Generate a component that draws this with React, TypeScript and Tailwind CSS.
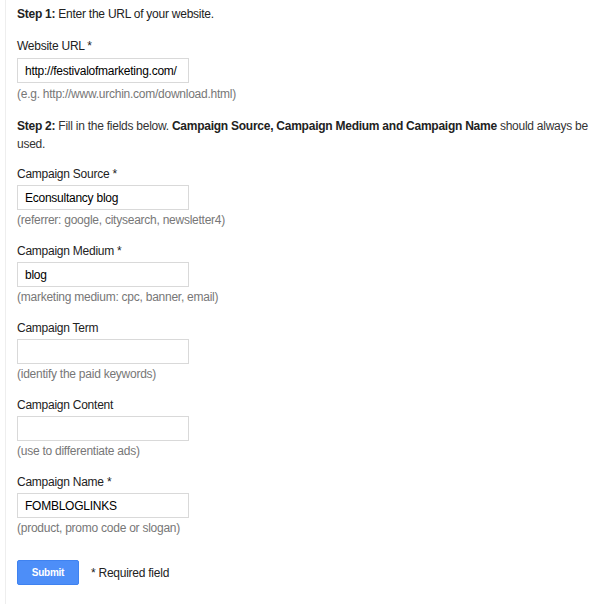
const fields = [
	{ label: 'Campaign Source *', value: 'Econsultancy blog', hint: '(referrer: google, citysearch, newsletter4)' },
	{ label: 'Campaign Medium *', value: 'blog', hint: '(marketing medium: cpc, banner, email)' },
	{ label: 'Campaign Term', value: '', hint: '(identify the paid keywords)' },
	{ label: 'Campaign Content', value: '', hint: '(use to differentiate ads)' },
	{ label: 'Campaign Name *', value: 'FOMBLOGLINKS', hint: '(product, promo code or slogan)' },
];

const Field = ({ label, value, hint }: { label: string; value: string; hint: string }) => {
	return (
		<div className="flex flex-col mb-[13px]">
			<p className="leading-[18px] text-[#222]">{label}</p>
			<input
				readOnly
				value={value}
				className="mt-[2px] w-[172px] h-[25px] border border-[#d9d9d9] bg-white px-[7px] text-[12px] tracking-[-0.25px] text-black outline-none"
			/>
			<p className="mt-[1px] leading-[18px] text-[#777]">{hint}</p>
		</div>
	);
};

const App = () => {
	return (
		<div className="w-[615px] h-[604px] bg-white pl-[5px] font-['Liberation_Sans',Arial,sans-serif] text-[12px] tracking-[-0.25px]">
			<div className="h-full border-l border-[#eeeeee] pl-[11px] pr-[20px] pt-[5px]">
				<p className="leading-[18px] text-[#222]">
					<b>Step 1:</b> Enter the URL of your website.
				</p>
				<p className="mt-[14px] leading-[18px] text-[#222]">Website URL *</p>
				<input
					readOnly
					value="http://festivalofmarketing.com/"
					className="mt-[3px] w-[172px] h-[25px] border border-[#d9d9d9] bg-white px-[7px] text-[12px] tracking-[-0.25px] text-black outline-none"
				/>
				<p className="mt-[2px] leading-[18px] text-[#777]">(e.g. http://www.urchin.com/download.html)</p>
				<p className="mt-[14px] leading-[18px] text-[#333]">
					<b className="text-[#222]">Step 2:</b> Fill in the fields below.{' '}
					<b className="text-[#222]">Campaign Source, Campaign Medium and Campaign Name</b> should always be used.
				</p>
				<div className="mt-[12px] flex flex-col">
					{fields.map((f) => (
						<Field key={f.label} {...f} />
					))}
				</div>
				<div className="mt-[10px] flex items-center gap-[12px]">
					<button className="w-[62px] h-[25px] rounded-[2px] border border-[#3f82f0] bg-[#4d8ef8] text-[10px] font-bold text-white">
						Submit
					</button>
					<span className="text-[#222]">* Required field</span>
				</div>
			</div>
		</div>
	);
};

export default App;
